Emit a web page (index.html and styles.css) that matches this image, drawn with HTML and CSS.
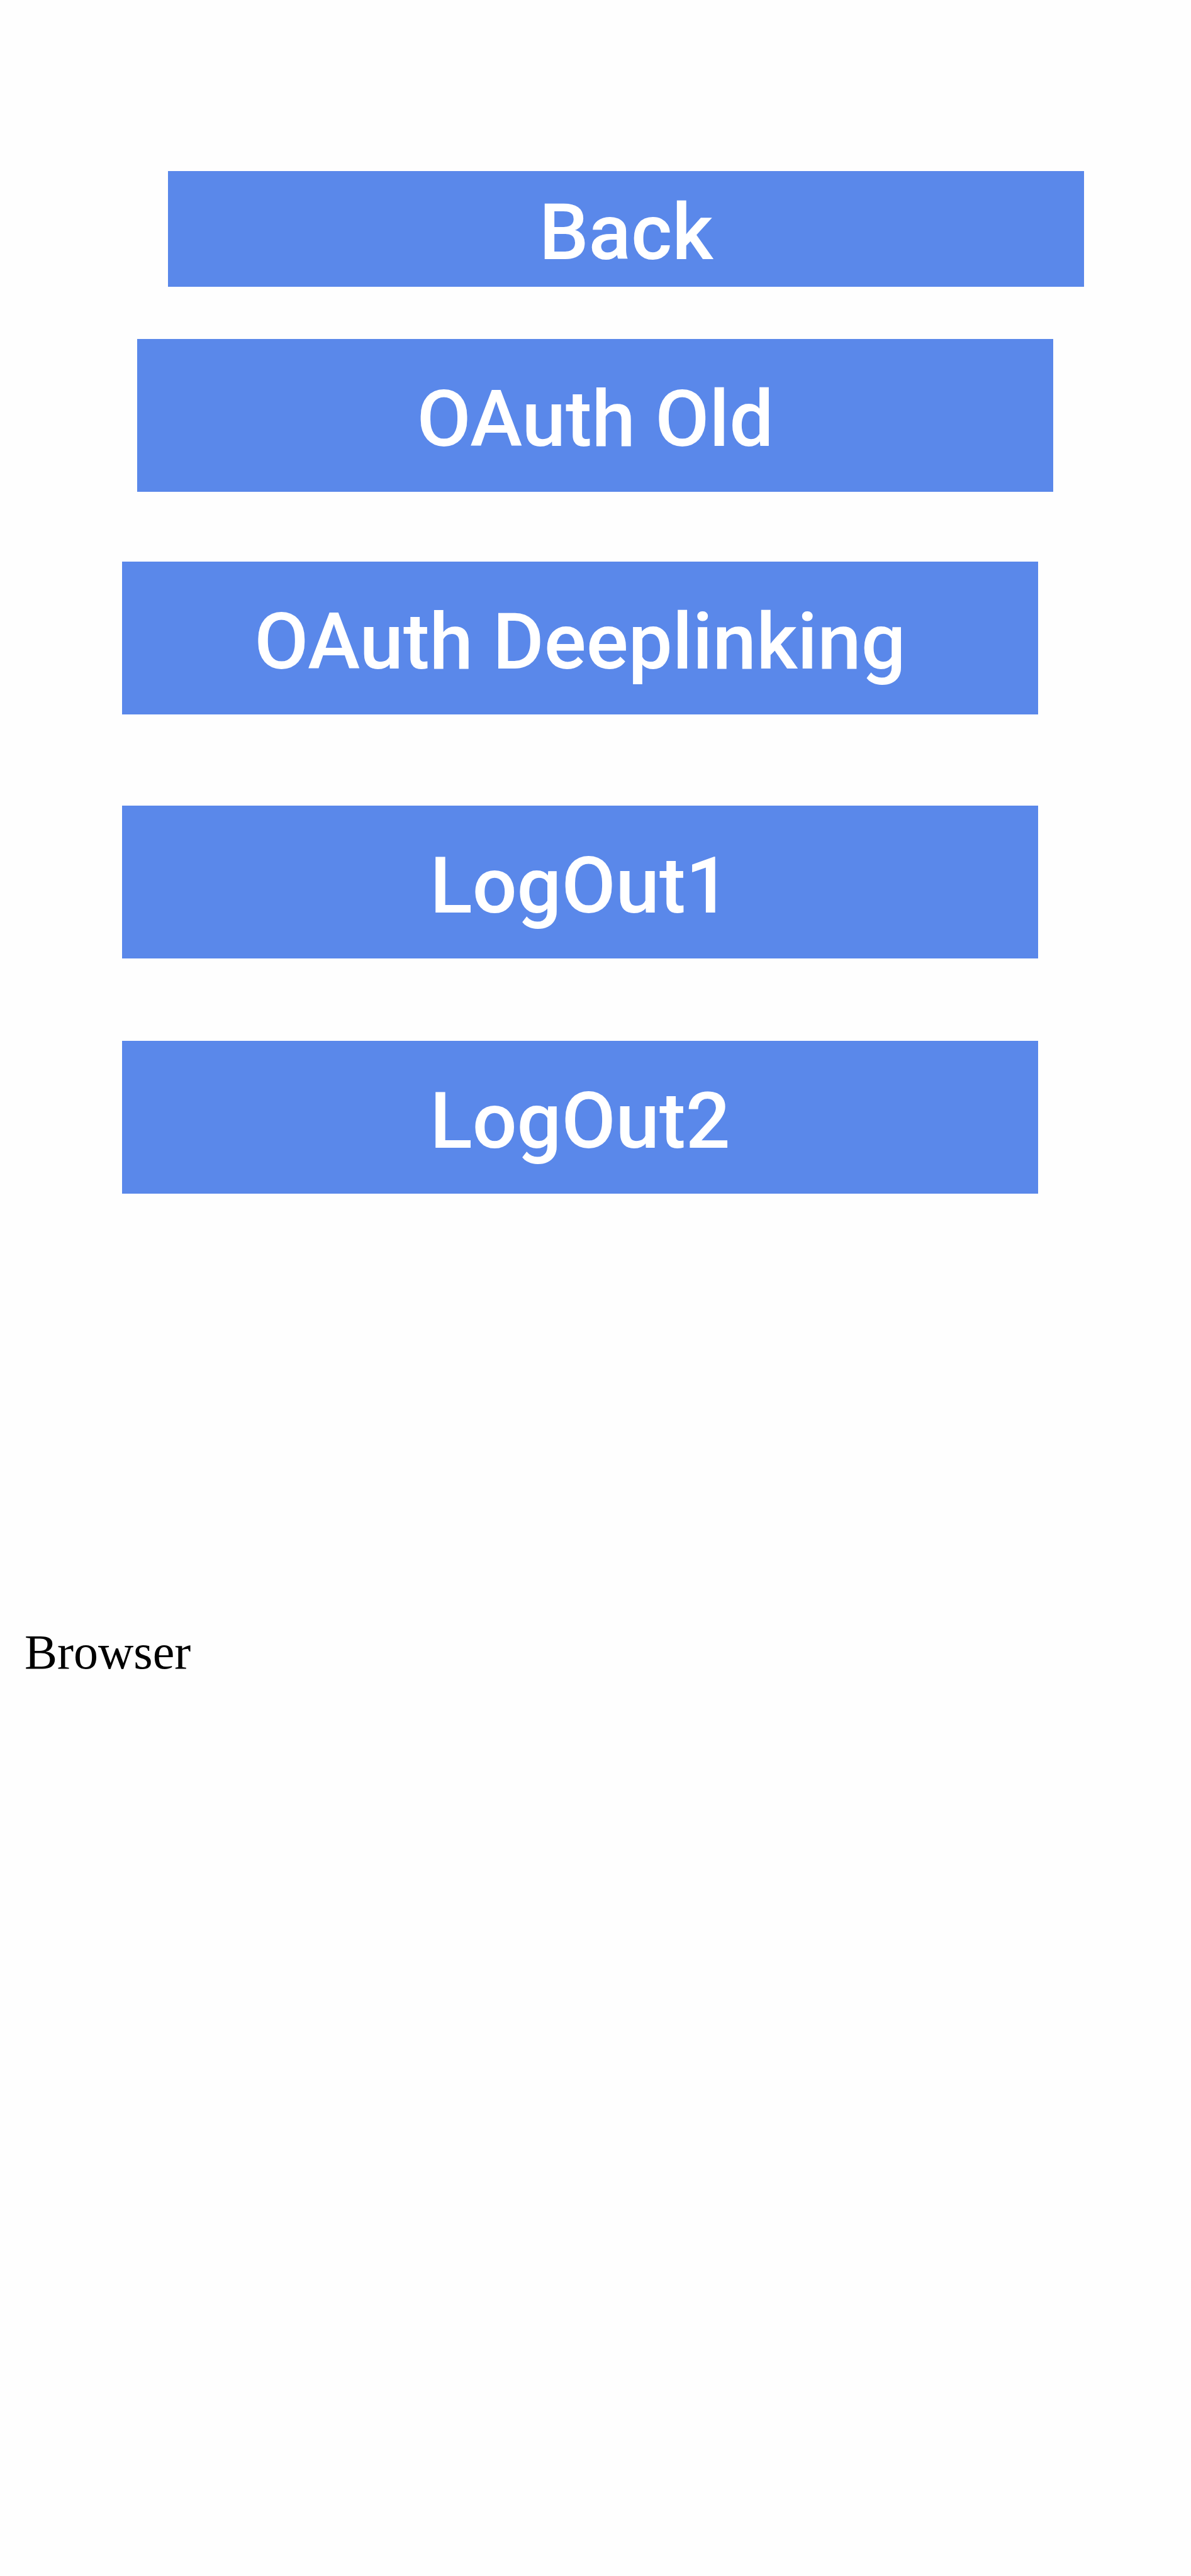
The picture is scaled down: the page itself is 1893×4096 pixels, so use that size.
FILE: index.html
```html
<!DOCTYPE html>
<html lang="en">
<head>
<meta charset="utf-8">
<meta name="viewport" content="width=device-width, initial-scale=1">
<title>Browser</title>
<link rel="stylesheet" href="styles.css">
</head>
<body>
<main class="page">
  <nav class="actions">
    <button type="button" class="action action-back">Back</button>
    <button type="button" class="action action-old">OAuth Old</button>
    <button type="button" class="action action-deeplink">OAuth Deeplinking</button>
    <button type="button" class="action action-logout1">LogOut1</button>
    <button type="button" class="action action-logout2">LogOut2</button>
  </nav>
  <p class="source">Browser</p>
</main>
</body>
</html>
```
FILE: styles.css
```css
* {
  box-sizing: border-box;
}

body {
  margin: 0;
  background: #fefefe;
}

.page {
  padding: 272px 0 0;
}

.actions {
  display: flex;
  flex-direction: column;
}

.action {
  margin: 0 243px 0 194px;
  padding: 12px 0 0;
  border: 0;
  min-height: 243px;
  background: #5a88ea;
  color: #fff;
  font: 500 125px/150px Roboto, sans-serif;
  text-align: center;
  cursor: pointer;
}

.action-back {
  min-height: 184px;
  margin: 0 170px 83px 267px;
}

.action-old {
  margin: 0 219px 111px 218px;
}

.action-deeplink {
  margin-bottom: 145px;
}

.action-logout1 {
  margin-bottom: 131px;
}

.source {
  margin: 684px 39px 0;
  color: #000;
  font: 78px/90px "Liberation Serif", serif;
}
```
